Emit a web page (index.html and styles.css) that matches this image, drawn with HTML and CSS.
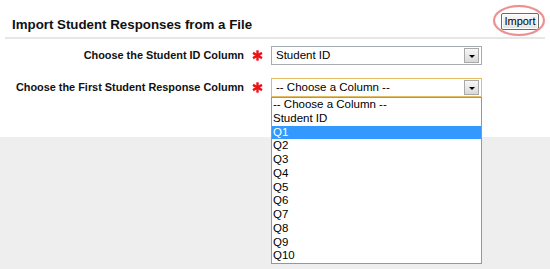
FILE: index.html
```html
<!DOCTYPE html>
<html lang="en">
<head>
    <meta charset="UTF-8">
    <meta name="viewport" content="width=device-width, initial-scale=1.0">
    <title>Import Student Responses</title>
    <link rel="stylesheet" href="styles.css">
</head>
<body>
    <div class="panel">
        <div class="titlebar">
            <h2 class="title">Import Student Responses from a File</h2>
            <div class="import-wrap">
                <button class="import-btn">Import</button>
                <span class="callout"></span>
            </div>
        </div>

        <div class="form">
            <div class="row">
                <label class="label">Choose the Student ID Column</label>
                <span class="req">
                    <svg width="11" height="11" viewBox="0 0 11 11">
                        <g stroke="#e8141b" stroke-width="2.4" stroke-linecap="butt">
                            <line x1="5.5" y1="0.3" x2="5.5" y2="10.7"/>
                            <line x1="1" y1="2.9" x2="10" y2="8.1"/>
                            <line x1="1" y1="8.1" x2="10" y2="2.9"/>
                        </g>
                    </svg>
                </span>
                <div class="select">
                    <span class="select-text">Student ID</span>
                    <span class="arrow"></span>
                </div>
            </div>

            <div class="row">
                <label class="label">Choose the First Student Response Column</label>
                <span class="req">
                    <svg width="11" height="11" viewBox="0 0 11 11">
                        <g stroke="#e8141b" stroke-width="2.4" stroke-linecap="butt">
                            <line x1="5.5" y1="0.3" x2="5.5" y2="10.7"/>
                            <line x1="1" y1="2.9" x2="10" y2="8.1"/>
                            <line x1="1" y1="8.1" x2="10" y2="2.9"/>
                        </g>
                    </svg>
                </span>
                <div class="select focused">
                    <span class="select-text">-- Choose a Column --</span>
                    <span class="arrow"></span>
                    <ul class="options">
                        <li>-- Choose a Column --</li>
                        <li>Student ID</li>
                        <li class="selected">Q1</li>
                        <li>Q2</li>
                        <li>Q3</li>
                        <li>Q4</li>
                        <li>Q5</li>
                        <li>Q6</li>
                        <li>Q7</li>
                        <li>Q8</li>
                        <li>Q9</li>
                        <li>Q10</li>
                    </ul>
                </div>
            </div>
        </div>
    </div>
</body>
</html>
```

FILE: styles.css
```css
* {
    box-sizing: border-box;
}

body {
    margin: 0;
    height: 100vh;
    background-color: #eeeeee;
    font-family: "Liberation Sans", Arial, sans-serif;
    color: #000;
}

.panel {
    background-color: #fff;
    height: 137px;
}

.titlebar {
    display: flex;
    justify-content: space-between;
    align-items: flex-start;
    height: 39px;
    margin: 0 5px;
    padding: 0 6px 0 7px;
    border-bottom: 2px solid #e6e6e6;
}

.title {
    margin: 17px 0 0 0;
    font-size: 13.3px;
    line-height: 16px;
    font-weight: bold;
    color: #111;
}

.import-wrap {
    position: relative;
    margin-top: 13px;
}

.import-btn {
    display: block;
    width: 38px;
    height: 17px;
    padding: 0;
    font-family: "Liberation Sans", Arial, sans-serif;
    font-size: 11px;
    line-height: 15px;
    color: #000;
    background: linear-gradient(#fafafa, #e4e4e4);
    border: 1px solid #6a6a6a;
    border-radius: 2px;
    box-shadow: inset 0 0 0 1px #fff;
}

.callout {
    position: absolute;
    left: -8px;
    top: -8px;
    width: 52px;
    height: 31px;
    border: 2px solid #ea8f8f;
    border-radius: 50%;
    box-shadow: 0 0 1px #f2b5b5, inset 0 0 1px #f2b5b5;
}

.form {
    display: flex;
    flex-direction: column;
    gap: 13px;
    padding-top: 7px;
}

.row {
    display: grid;
    grid-template-columns: 244px 27px 211px;
    align-items: center;
    height: 19px;
}

.label {
    justify-self: end;
    white-space: nowrap;
    text-align: right;
    font-size: 10.9px;
    line-height: 19px;
    font-weight: bold;
    color: #111;
}

.req {
    display: flex;
    padding-left: 8px;
}

.select {
    position: relative;
    display: flex;
    align-items: center;
    justify-content: space-between;
    height: 19px;
    padding: 1px 2px 1px 4px;
    background-color: #fff;
    border: 1px solid #a5acb2;
    font-size: 11.5px;
    line-height: 17px;
}

.select.focused {
    border-color: #e2bb62;
}

.arrow {
    position: relative;
    width: 15px;
    height: 15px;
    border: 1px solid #a9a9a9;
    background: linear-gradient(#f7f7f7, #d9d9d9);
}

.arrow::after {
    content: "";
    position: absolute;
    left: 4px;
    top: 6px;
    border-left: 3px solid transparent;
    border-right: 3px solid transparent;
    border-top: 3px solid #000;
}

.options {
    position: absolute;
    left: -1px;
    top: 18px;
    width: 211px;
    margin: 0;
    padding: 0;
    list-style: none;
    background-color: #fff;
    border: 1px solid #7f9db9;
}

.options li {
    height: 13.75px;
    padding-left: 1px;
    font-size: 11.5px;
    line-height: 13.75px;
}

.options .selected {
    background-color: #3399ff;
    color: #fff;
}
```
